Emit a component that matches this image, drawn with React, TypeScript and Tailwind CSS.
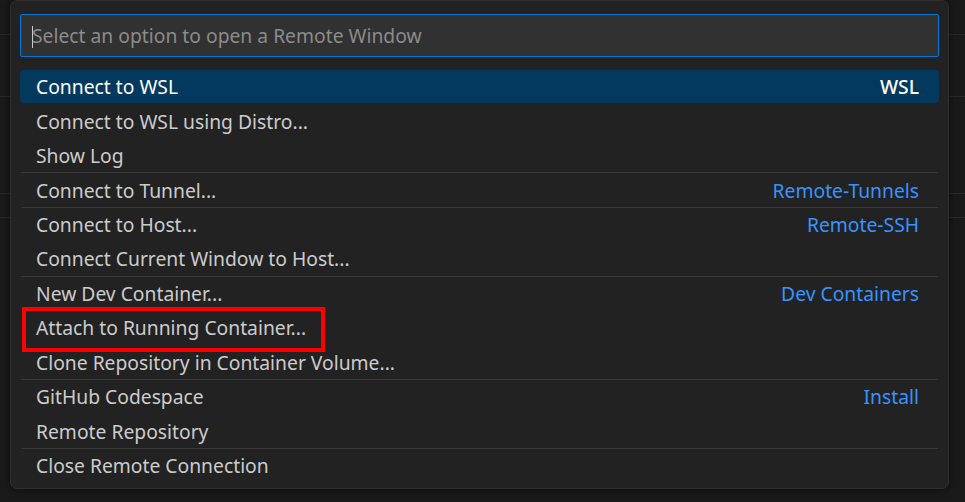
const items = [
  { label: "Connect to WSL", detail: "WSL", selected: true },
  { label: "Connect to WSL using Distro..." },
  { label: "Show Log" },
  { label: "Connect to Tunnel...", detail: "Remote-Tunnels", sep: true },
  { label: "Connect to Host...", detail: "Remote-SSH", sep: true },
  { label: "Connect Current Window to Host..." },
  { label: "New Dev Container...", detail: "Dev Containers", sep: true },
  { label: "Attach to Running Container...", marked: true },
  { label: "Clone Repository in Container Volume..." },
  { label: "GitHub Codespace", detail: "Install", sep: true },
  { label: "Remote Repository" },
  { label: "Close Remote Connection", sep: true },
];

type Item = {
  label: string;
  detail?: string;
  selected?: boolean;
  sep?: boolean;
  marked?: boolean;
};

function Row({ item }: { item: Item }) {
  return (
    <div className={item.sep ? "border-t border-[#3a3a3a] mx-[10px]" : "mx-[10px] border-t border-transparent"}>
      <div
        className={
          "relative h-[33.45px] flex items-center justify-between pl-[16px] pr-[20px] pt-[2px] rounded-[4px] -mx-[1px] " +
          (item.selected ? "bg-[#04395e] text-white" : "text-[#cccccc]")
        }
      >
        <span>{item.label}</span>
        {item.detail && (
          <span className={item.selected ? "text-white font-medium" : "text-[#3794ff]"}>{item.detail}</span>
        )}
        {item.marked && (
          <div className="absolute left-[2px] top-[-4px] w-[303px] h-[45px] border-[4px] border-[#ff0000]" />
        )}
      </div>
    </div>
  );
}

export default function App() {
  return (
    <div
      className="relative w-[965px] h-[502px] bg-[#1a1a1a] overflow-hidden text-[19.3px]"
      style={{ fontFamily: '"Noto Sans", "Open Sans", sans-serif' }}
    >
      {/* editor lines behind the quick pick */}
      <div className="flex flex-col">
        <div className="h-[35px] border-b border-[#2a2a2a]" />
        <div className="h-[62px] border-b border-[#2a2a2a]" />
        <div className="h-[97px] border-b border-[#2a2a2a]" />
        <div className="h-[24px] border-b border-[#2a2a2a]" />
      </div>

      <div className="absolute left-[10px] top-[0px] w-[939px] h-[489px] bg-[#222222] border border-[#303030] rounded-[7px] shadow-[0_0_8px_rgba(0,0,0,0.6)]">
        <div className="px-[9px] pt-[13px] pb-[12px]">
          <div className="h-[43px] bg-[#313131] border border-[#0078d4] rounded-[2px] flex items-center pl-[11px] pt-[2px]">
            <span className="w-px h-[22px] bg-[#cccccc] mr-[-1px]" />
            <span className="text-[#8b8b8b]">Select an option to open a Remote Window</span>
          </div>
        </div>
        <div className="flex flex-col">
          {items.map((item, i) => (
            <Row key={i} item={item} />
          ))}
        </div>
      </div>
    </div>
  );
}
